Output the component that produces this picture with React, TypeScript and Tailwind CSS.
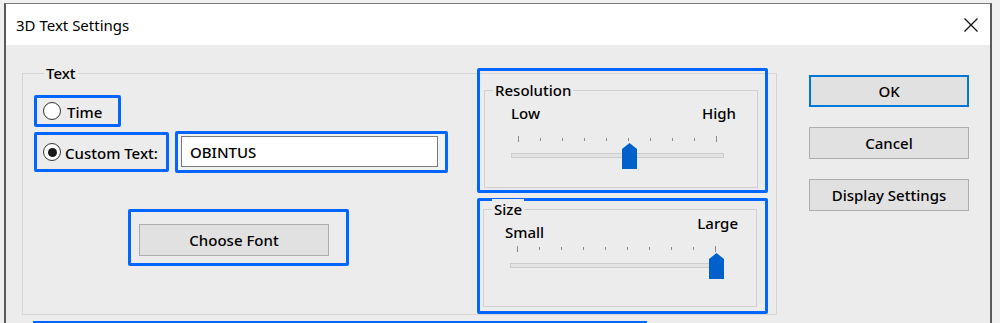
import React from 'react';

const FONT = {fontFamily: '"Noto Sans", "Open Sans", Arial, sans-serif'};

// ten tick slider, thumb placed from the value
function TickSlider({value}: {value: number}) {
  const ticks = Array.from({length: 10}, (_, i) => i);
  const left = (value * 199) / 9;
  return (
    <div className="w-[213px]">
      <div className="flex h-[6px] items-center justify-between px-[7px]">
        {ticks.map((t) => (
          <span
            key={t}
            className={
              t === 0 || t === 9
                ? 'h-[6px] w-px bg-[#8c8c8c]'
                : 'h-[3px] w-px bg-[#8c8c8c]'
            }
          />
        ))}
      </div>
      <div className="relative mt-[11px] h-[5px] border border-[#cdcdcd] bg-[#e3e3e3]">
        <svg
          className="absolute top-[-11px]"
          style={{left: left - 1}}
          width="15"
          height="26"
          viewBox="0 0 15 26"
        >
          <path d="M0 6 L7.5 0 L15 6 L15 26 L0 26 Z" fill="#0061cc" />
        </svg>
      </div>
    </div>
  );
}

function Radio({checked}: {checked?: boolean}) {
  return (
    <span className="flex h-[18px] w-[18px] items-center justify-center rounded-full border border-[#333] bg-white">
      {checked && <span className="h-[9px] w-[9px] rounded-full bg-[#1a1a1a]" />}
    </span>
  );
}

function Button({label, primary, wide}: {label: string; primary?: boolean; wide?: boolean}) {
  const size = wide ? 'h-[32px] w-[190px]' : 'h-[32px] w-[160px]';
  return (
    <button
      className={
        primary
          ? `${size} border-2 border-[#0078d7] bg-[#e1e1e1] text-[15px] font-medium text-black`
          : `${size} border border-[#adadad] bg-[#e1e1e1] text-[15px] font-medium text-black`
      }
    >
      {label}
    </button>
  );
}

export default function App() {
  return (
    <div
      className="h-[323px] w-[1000px] overflow-hidden bg-[#f0f0f0] pr-[8px] pl-[4px] pt-[3px] text-[15px] font-medium text-black"
      style={FONT}
    >
      <div className="flex h-[330px] flex-col border-t border-r-2 border-l-2 border-t-[#7a7a7a] border-r-[#5a5a5a] border-l-[#5a5a5a]">
        {/* title bar */}
        <div className="flex h-[41px] items-center justify-between bg-white pr-[11px] pl-[10px]">
          <span className="mt-[1px] leading-5 font-normal">3D Text Settings</span>
          <svg width="16" height="16" viewBox="0 0 16 16">
            <path d="M1.5 1.5 L14.5 14.5 M14.5 1.5 L1.5 14.5" stroke="#111" strokeWidth="1.3" />
          </svg>
        </div>

        <div className="flex-1 bg-[#ececec] pl-[16px]">
          <div className="flex pt-[28px]">
            {/* Text group */}
            <div className="flex h-[242px] w-[755px] border border-[#d5d5d5] pr-[8px]">
              <div className="flex w-[443px] flex-col pl-[11px]">
                <div className="-mt-[11px] ml-[10px] w-fit bg-[#ececec] px-[2px] leading-5">Text</div>

                <div className="mt-[12px] flex h-[32px] w-[87px] items-center gap-[6px] rounded-[2px] border-[3px] border-[#0066ff] pl-[6px]">
                  <Radio />
                  <span className="mt-[2px] leading-5">Time</span>
                </div>

                <div className="mt-[4px] flex items-center">
                  <div className="flex h-[40px] w-[135px] items-center gap-[4px] rounded-[2px] border-[3px] border-[#0066ff] pl-[6px]">
                    <Radio checked />
                    <span className="mt-[2px] leading-5">Custom Text:</span>
                  </div>
                  <div className="ml-[6px] h-[42px] w-[273px] rounded-[2px] border-[3px] border-[#0066ff] bg-[#f2f2f2] pt-[2px] pl-[3px]">
                    <div className="flex h-[31px] w-[257px] items-center border border-[#7a7a7a] bg-white pt-[1px] pl-[8px]">
                      OBINTUS
                    </div>
                  </div>
                </div>

                <div className="mt-[36px] ml-[94px] h-[57px] w-[221px] rounded-[2px] border-[3px] border-[#0066ff] pt-[12px] pl-[8px]">
                  <Button label="Choose Font" wide />
                </div>
              </div>

              <div className="-mt-[6px] ml-auto flex w-[291px] flex-col">
                {/* Resolution */}
                <div className="h-[125px] rounded-[2px] border-[3px] border-[#0066ff] pt-[19px] pr-[7px] pl-[4px]">
                  <div className="h-[98px] border border-[#d0d0d0]">
                    <div className="-mt-[11px] ml-[8px] w-fit bg-[#ececec] px-[2px] leading-5">Resolution</div>
                    <div className="mt-[3px] flex justify-between pr-[21px] pl-[26px] leading-5">
                      <span>Low</span>
                      <span>High</span>
                    </div>
                    <div className="mt-[13px] pl-[26px]">
                      <TickSlider value={5} />
                    </div>
                  </div>
                </div>

                {/* Size */}
                <div className="mt-[5px] h-[117px] rounded-[2px] border-[3px] border-[#0066ff] pt-[8px] pr-[8px] pl-[3px]">
                  <div className="h-[98px] border border-[#d0d0d0]">
                    <div className="-mt-[11px] ml-[8px] w-fit bg-[#ececec] px-[2px] leading-5">Size</div>
                    <div className="flex items-start justify-between pr-[18px] pl-[21px] leading-5">
                      <span className="mt-[3px]">Small</span>
                      <span className="-mt-[6px]">Large</span>
                    </div>
                    <div className="mt-[4px] pl-[26px]">
                      <TickSlider value={9} />
                    </div>
                  </div>
                </div>
              </div>
            </div>

            {/* dialog buttons */}
            <div className="mt-[2px] ml-[32px] flex flex-col gap-[20px]">
              <Button label="OK" primary />
              <Button label="Cancel" />
              <Button label="Display Settings" />
            </div>
          </div>
          <div className="mt-[6px] ml-[11px] h-[3px] w-[614px] bg-[#0066ff]" />
        </div>
      </div>
    </div>
  );
}
